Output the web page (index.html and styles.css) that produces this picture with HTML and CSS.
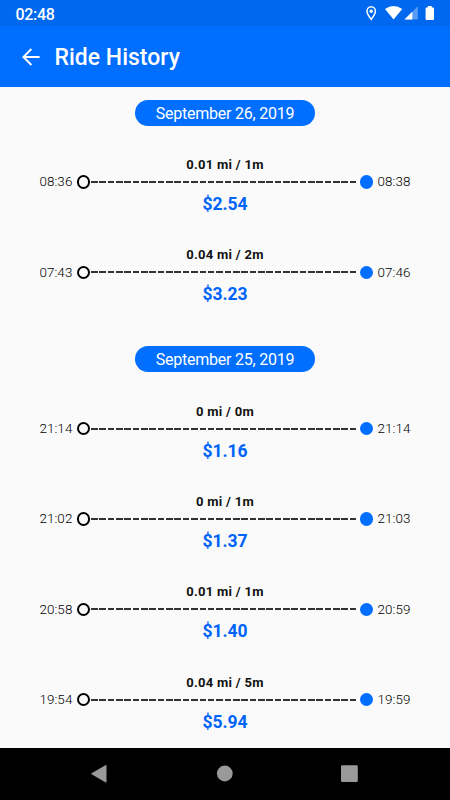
FILE: index.html
```html
<!DOCTYPE html>
<html lang="en">
<head>
  <meta charset="UTF-8">
  <title>Ride History</title>
  <link rel="stylesheet" href="styles.css">
</head>
<body>
  <div class="status">
    <span class="clock">02:48</span>
    <svg class="status-icons" width="70" height="26" viewBox="0 0 70 26">
      <path d="M6.2 19.4C3.8 16 2 13.800 2 11.200a4.200 4.400 0 0 1 8.400 0c0 2.600-1.800 4.800-4.200 8.200z" fill="none" stroke="#fff" stroke-width="1.500"/>
      <circle cx="6.200" cy="11.200" r="1.700" fill="#fff"/>
      <path d="M20 9.100Q28.600 2.700 37.200 9.100L28.600 19.400z" fill="#fff"/>
      <path d="M52.800 6.200V19.500H39.500z" fill="#fff" opacity=".35"/>
      <path d="M47.300 11.700V19.500H39.500z" fill="#fff"/>
      <path d="M62.800 6.100h4v1.400h1.400q.8 0 .8.800v10.800q0 .8-.8.800h-6.800q-.8 0-.8-.8V8.300q0-.8.8-.8h1.400z" fill="#fff"/>
    </svg>
  </div>
  <header class="bar">
    <svg class="back" width="18" height="18" viewBox="0 0 18 18" fill="none" stroke="#fff" stroke-width="1.900">
      <path d="M9.400 1L1.400 9L9.400 17M1.400 9H17.600"/>
    </svg>
    <h1>Ride History</h1>
  </header>
  <main class="list">
    <section class="day">
      <h2>September 26, 2019</h2>
      <div class="ride">
        <p class="info">0.01 mi / 1m</p>
        <div class="track"><span class="time">08:36</span><i class="start"></i><i class="dash"></i><i class="end"></i><span class="time">08:38</span></div>
        <p class="price">$2.54</p>
      </div>
      <div class="ride">
        <p class="info">0.04 mi / 2m</p>
        <div class="track"><span class="time">07:43</span><i class="start"></i><i class="dash"></i><i class="end"></i><span class="time">07:46</span></div>
        <p class="price">$3.23</p>
      </div>
    </section>
    <section class="day">
      <h2>September 25, 2019</h2>
      <div class="ride">
        <p class="info">0 mi / 0m</p>
        <div class="track"><span class="time">21:14</span><i class="start"></i><i class="dash"></i><i class="end"></i><span class="time">21:14</span></div>
        <p class="price">$1.16</p>
      </div>
      <div class="ride">
        <p class="info">0 mi / 1m</p>
        <div class="track"><span class="time">21:02</span><i class="start"></i><i class="dash"></i><i class="end"></i><span class="time">21:03</span></div>
        <p class="price">$1.37</p>
      </div>
      <div class="ride">
        <p class="info">0.01 mi / 1m</p>
        <div class="track"><span class="time">20:58</span><i class="start"></i><i class="dash"></i><i class="end"></i><span class="time">20:59</span></div>
        <p class="price">$1.40</p>
      </div>
      <div class="ride">
        <p class="info">0.04 mi / 5m</p>
        <div class="track"><span class="time">19:54</span><i class="start"></i><i class="dash"></i><i class="end"></i><span class="time">19:59</span></div>
        <p class="price">$5.94</p>
      </div>
    </section>
  </main>
  <nav class="nav">
    <svg width="450" height="52" viewBox="0 0 450 52" fill="#999">
      <path d="M106.500 17.500v16.500q0 .8-.7.400L91.600 26.300q-.6-.5 0-1L105.800 17.100q.7-.4.700.4z"/>
      <circle cx="224.800" cy="25.500" r="7.900"/>
      <rect x="341" y="17.200" width="16.800" height="16.800" rx="1.200"/>
    </svg>
  </nav>
</body>
</html>
```

FILE: styles.css
```css
* {
  box-sizing: border-box;
}
body {
  margin: 0;
  height: 800px;
  display: flex;
  flex-direction: column;
  overflow: hidden;
  background: #fafafa;
  color: #111;
  font-family: Roboto, sans-serif;
}
h1, h2, p {
  margin: 0;
}
.status {
  flex: none;
  height: 26px;
  padding: 0 15px;
  display: flex;
  align-items: center;
  justify-content: space-between;
  background: #0068ee;
  color: #fff;
}
.clock {
  padding: 2px 0 0 .4px;
  font-size: 16px;
  font-weight: 500;
  letter-spacing: -.3px;
}
.bar {
  flex: none;
  height: 61px;
  padding-left: 22px;
  display: flex;
  align-items: center;
  gap: 14.5px;
  background: #006eff;
  color: #fff;
}
h1 {
  padding-top: 2px;
  font-size: 23px;
  font-weight: 500;
  line-height: 26px;
}
.list {
  flex: 1;
  min-height: 0;
  padding-top: 12.7px;
  overflow: hidden;
}
.day {
  padding-bottom: 20px;
}
h2 {
  width: 180px;
  height: 26px;
  margin: 0 auto 20px;
  border-radius: 13px;
  background: #006eff;
  color: #fff;
  font-size: 16px;
  font-weight: 400;
  line-height: 28px;
  letter-spacing: -.24px;
  text-align: center;
}
.ride {
  height: 90.35px;
  padding-top: 10.2px;
  text-align: center;
}
.info {
  height: 16px;
  font-size: 13px;
  font-weight: 700;
  line-height: 17px;
  letter-spacing: .3px;
}
.track {
  height: 20px;
  display: flex;
  align-items: center;
  justify-content: center;
}
.time {
  width: 34px;
  font-size: 13.4px;
  font-weight: 300;
  letter-spacing: .1px;
  color: #000;
}
.start, .end {
  width: 13.4px;
  height: 13.4px;
  border-radius: 50%;
}
.start {
  margin-left: 4px;
  border: 2px solid #000;
}
.end {
  margin-right: 4px;
  background: #006eff;
}
.dash {
  width: 265.4px;
  height: 2px;
  margin: 0 3px 0 1px;
  background: repeating-linear-gradient(90deg, #333 0 6.6px, transparent 6.6px 8.35px);
}
.price {
  color: #0064f8;
  font-size: 17.5px;
  font-weight: 700;
  line-height: 24.4px;
}
.nav {
  flex: none;
  height: 52px;
  background: #000;
}
.nav svg {
  display: block;
}
```
